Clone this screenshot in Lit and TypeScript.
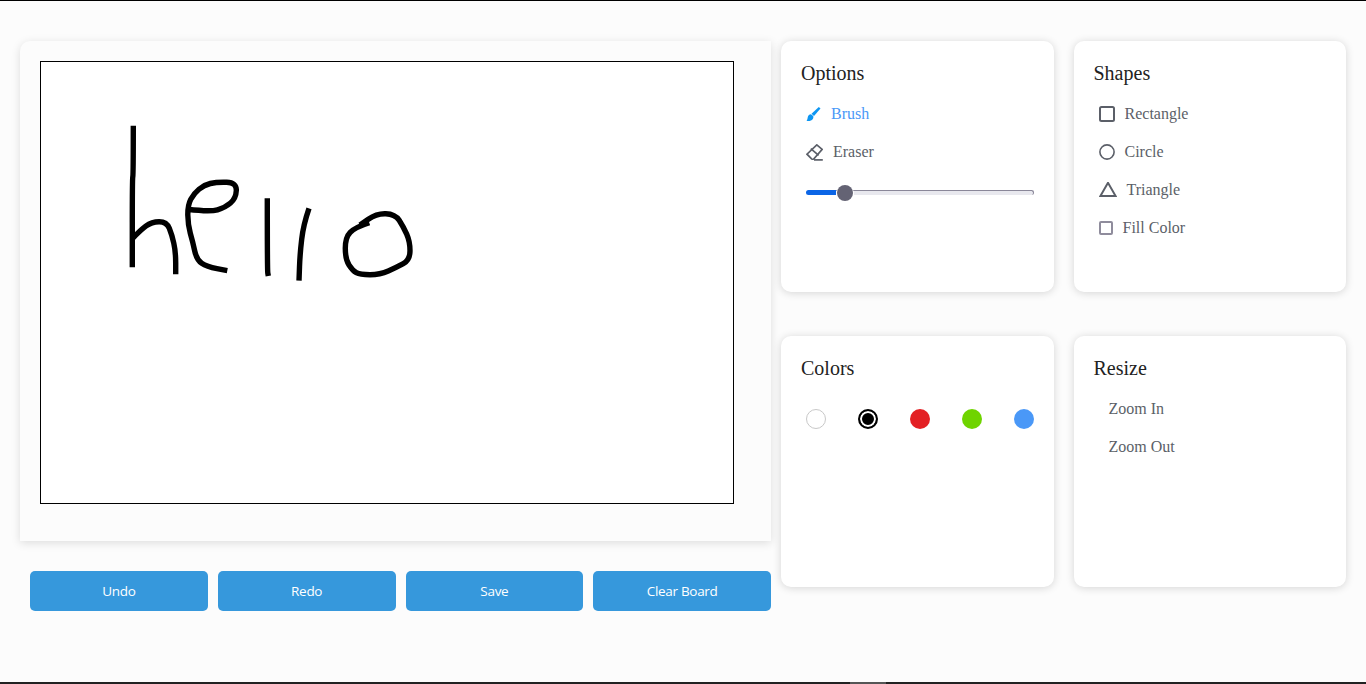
import { LitElement, html, css, svg } from "lit";
import { customElement } from "lit/decorators.js";

const colors = [
  { c: "#ffffff", cls: "swatch white" },
  { c: "#000000", cls: "swatch selected" },
  { c: "#e32024", cls: "swatch" },
  { c: "#6fd400", cls: "swatch" },
  { c: "#4a98f7", cls: "swatch" },
];

// Freehand strokes, sampled as [x, y] in a 3x crop whose origin is (110,110) on the page.
const strokes: number[][][] = [
  [[70, 47], [70, 195], [67, 205], [67, 472]],
  [[68, 385], [90, 362], [125, 335], [170, 335], [186, 375], [197, 425], [197, 493]],
  [[233, 298], [300, 306], [345, 293], [378, 265], [380, 218], [320, 216], [282, 225], [252, 250], [233, 285], [234, 345], [248, 395], [260, 450], [290, 470], [352, 482]],
  [[472, 265], [472, 480], [475, 498]],
  [[597, 295], [580, 345], [570, 430], [567, 512]],
  [[778, 338], [735, 352], [706, 382], [706, 448], [728, 482], [750, 494], [810, 494], [860, 472], [900, 450], [900, 395], [880, 350], [855, 312], [800, 310], [750, 345]],
];

function smooth(points: number[][]): string {
  const p = points.map(([x, y]) => [x / 3 + 110, y / 3 + 110]);
  const f = (n: number) => n.toFixed(1);
  let d = `M${f(p[0][0])} ${f(p[0][1])}`;
  for (let i = 1; i < p.length - 1; i++) {
    const mx = (p[i][0] + p[i + 1][0]) / 2;
    const my = (p[i][1] + p[i + 1][1]) / 2;
    d += `Q${f(p[i][0])} ${f(p[i][1])} ${f(mx)} ${f(my)}`;
  }
  const last = p[p.length - 1];
  return d + `L${f(last[0])} ${f(last[1])}`;
}

@customElement("app-root")
export class AppRoot extends LitElement {
  static styles = css`
    :host {
      display: block;
      font-family: "Liberation Serif", "Times New Roman", serif;
    }
    .page {
      box-sizing: border-box;
      height: 684px;
      background: #fcfcfc;
      border-top: 1px solid #000;
      display: flex;
      flex-direction: column;
      overflow: hidden;
    }
    .main {
      flex: 1;
      display: flex;
      padding: 40px 20px 0;
      min-height: 0;
    }
    .left {
      width: 751px;
      flex: none;
      display: flex;
      flex-direction: column;
    }
    .board {
      box-sizing: border-box;
      height: 500px;
      padding: 20px;
      background: #fcfcfc;
      border-radius: 10px 0 0 0;
      box-shadow: 0 2px 10px rgba(0, 0, 0, 0.13);
    }
    .canvas {
      box-sizing: border-box;
      width: 694px;
      height: 443px;
      border: 1px solid #000;
      background: #fff;
    }
    .canvas svg {
      display: block;
    }
    .actions {
      display: grid;
      grid-template-columns: repeat(4, 1fr);
      gap: 10px;
      margin-top: 30px;
      padding-left: 10px;
    }
    .actions button {
      height: 40px;
      border: 0;
      padding: 0;
      border-radius: 5px;
      background: #3698dc;
      color: #fff;
      font: 13.5px "Open Sans", sans-serif;
      letter-spacing: -0.3px;
    }
    .right {
      margin-left: 10px;
      flex: 1;
      display: grid;
      grid-template-columns: 1fr 1fr;
      grid-template-rows: 251px 251px;
      gap: 44px 20px;
    }
    .card {
      box-sizing: border-box;
      background: #fff;
      border-radius: 10px;
      padding: 20px;
      box-shadow: 0 1px 8px rgba(0, 0, 0, 0.16);
      min-width: 0;
    }
    .title {
      font-size: 20px;
      line-height: 24px;
      font-weight: 400;
      color: #222;
      margin: 0 0 10px;
    }
    .item {
      display: flex;
      align-items: center;
      gap: 10px;
      height: 38px;
      padding-left: 5px;
      font-size: 16px;
      color: #5b5f68;
    }
    .item svg {
      display: block;
      flex: none;
    }
    .item.active {
      color: #4a98f7;
    }
    .item.plain {
      padding-left: 15px;
    }
    .check {
      box-sizing: border-box;
      width: 14px;
      height: 14px;
      border: 2px solid #8f8c9c;
      border-radius: 2px;
      background: #fff;
    }
    .slider {
      position: relative;
      margin: 19px 0 0 5px;
      height: 5px;
      display: flex;
    }
    .fill {
      width: 30px;
      background: #0b65e6;
      border-radius: 3px 0 0 3px;
    }
    .rest {
      flex: 1;
      box-sizing: border-box;
      background: #e8e8ee;
      border-top: 1px solid #8a8799;
      border-right: 1px solid #8a8799;
      border-radius: 0 3px 3px 0;
    }
    .thumb {
      position: absolute;
      left: 31px;
      top: -5px;
      width: 16px;
      height: 16px;
      border-radius: 50%;
      background: #646374;
      box-shadow: 0 1px 0 1px #fff;
    }
    .swatches {
      display: flex;
      justify-content: space-between;
      margin: 29px 0 0 5px;
    }
    .swatch {
      box-sizing: border-box;
      width: 20px;
      height: 20px;
      border-radius: 50%;
    }
    .swatch.white {
      border: 1px solid #c8c8c8;
    }
    .swatch.selected {
      border: 2px solid #000;
      box-shadow: inset 0 0 0 2px #fff;
    }
    .bottom {
      flex: none;
      height: 2px;
      background: #222;
      display: flex;
      padding-left: 850px;
    }
    .bottom span {
      width: 36px;
      background: #555;
    }
  `;

  render() {
    return html`
      <div class="page">
        <div class="main">
          <div class="left">
            <div class="board">
              <div class="canvas">
                <svg width="692" height="441" viewBox="41 62 692 441" fill="none" stroke="#000" stroke-width="5.4" stroke-linejoin="round">
                  ${strokes.map((s) => svg`<path d=${smooth(s)} />`)}
                </svg>
              </div>
            </div>
            <div class="actions">
              <button>Undo</button>
              <button>Redo</button>
              <button>Save</button>
              <button>Clear Board</button>
            </div>
          </div>
          <div class="right">
            <section class="card">
              <h2 class="title">Options</h2>
              <div class="item active">
                <svg width="15" height="15" viewBox="-0.5 0 15 15" fill="#0d96f2">
                  <path d="M12.3 0L14 1.4L7.5 9L5 6.8Z" />
                  <path d="M4.5 7.2C2.5 7.5 1.5 8.5 1.2 10.5C1 12 0.6 13 0 13.8C2 14.4 5 14 6.3 12C7 10.8 7 9.8 6.7 9Z" />
                </svg>
                <span>Brush</span>
              </div>
              <div class="item">
                <svg width="17" height="17" viewBox="0 0 17 17" fill="none" stroke="#5b5f68" stroke-width="1.7">
                  <path d="M10.8 0.9L16.2 5.4L8.6 14C7.8 15.4 6.6 15.6 5.6 14.8L1 10.2Z" />
                  <path d="M4.8 4.6L12.6 11.4" />
                  <path d="M8 15.9H16.8" />
                </svg>
                <span>Eraser</span>
              </div>
              <div class="slider">
                <div class="fill"></div>
                <div class="rest"></div>
                <div class="thumb"></div>
              </div>
            </section>
            <section class="card">
              <h2 class="title">Shapes</h2>
              <div class="item">
                <svg width="16" height="16" viewBox="0 0 16 16" fill="none" stroke="#5b5f68" stroke-width="2">
                  <rect x="1" y="1" width="14" height="14" rx="1.5" />
                </svg>
                <span>Rectangle</span>
              </div>
              <div class="item">
                <svg width="16" height="16" viewBox="0 0 16 16" fill="none" stroke="#5b5f68" stroke-width="1.6">
                  <circle cx="8" cy="8" r="7.1" />
                </svg>
                <span>Circle</span>
              </div>
              <div class="item">
                <svg width="18" height="16" viewBox="0 1 18 16" fill="none" stroke="#5b5f68" stroke-width="2">
                  <path d="M9 1.8L1.4 15H16.6Z" />
                </svg>
                <span>Triangle</span>
              </div>
              <div class="item">
                <span class="check"></span>
                <span>Fill Color</span>
              </div>
            </section>
            <section class="card">
              <h2 class="title">Colors</h2>
              <div class="swatches">
                ${colors.map((s) => html`<div class=${s.cls} style="background:${s.c}"></div>`)}
              </div>
            </section>
            <section class="card">
              <h2 class="title">Resize</h2>
              <div class="item plain">Zoom In</div>
              <div class="item plain">Zoom Out</div>
            </section>
          </div>
        </div>
        <div class="bottom"><span></span></div>
      </div>
    `;
  }
}
